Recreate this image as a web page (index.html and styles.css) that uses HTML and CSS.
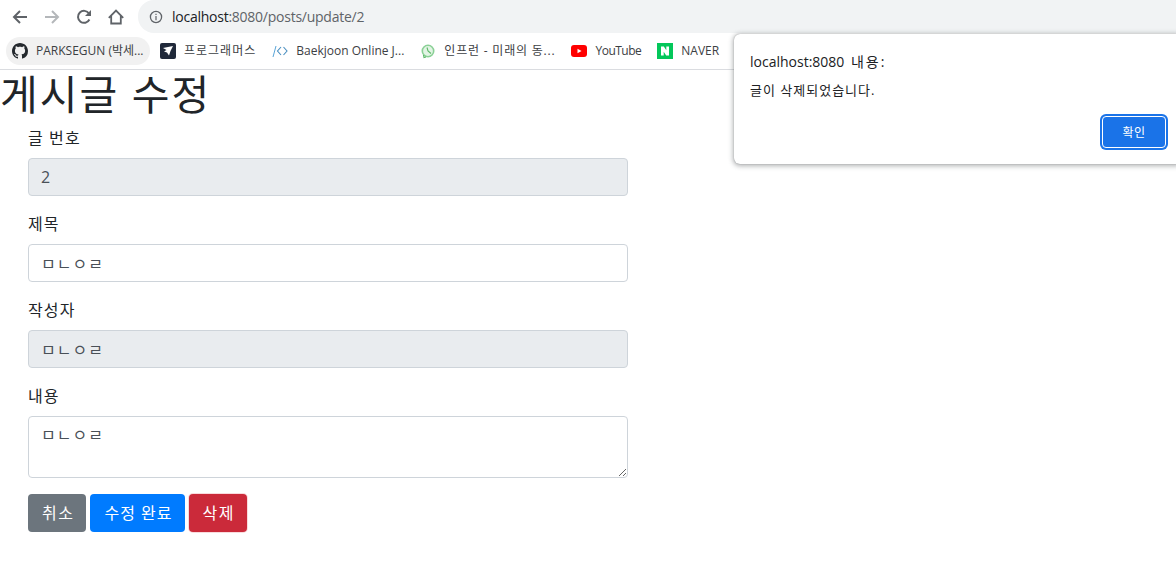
FILE: index.html
```html
<!DOCTYPE html>
<html lang="ko">
<head>
<meta charset="utf-8">
<title>게시글 수정</title>
<link rel="stylesheet" href="styles.css">
</head>
<body>
<header class="chrome">
  <div class="toolbar">
    <div class="nav-buttons">
      <svg class="nav-icon" viewBox="0 0 16 16"><path d="M15 8H2.500M8 2 2 8l6 6" fill="none" stroke="#5f6368" stroke-width="2"/></svg>
      <svg class="nav-icon" viewBox="0 0 16 16"><path d="M1 8h12.500M8 2l6 6-6 6" fill="none" stroke="#b4b7ba" stroke-width="2"/></svg>
      <svg class="nav-icon" viewBox="0 0 16 16"><path d="M13.400 10.500A6 6 0 1 1 13 4.500" fill="none" stroke="#5f6368" stroke-width="2"/><path d="M15 1v6H9z" fill="#5f6368"/></svg>
      <svg class="nav-icon" viewBox="0 0 16 16"><path d="M.8 8.800 8 1.500l7.200 7.300M3.200 7v7.500h9.600V7" fill="none" stroke="#5f6368" stroke-width="1.800"/></svg>
    </div>
    <div class="address">
      <svg class="info-icon" viewBox="0 0 14 14"><circle cx="7" cy="7" r="5.600" fill="none" stroke="#5f6368" stroke-width="1.300"/><path d="M6.400 6h1.200v4.200H6.400zM6.400 3.700h1.200v1.200H6.400z" fill="#5f6368"/></svg>
      <span class="url"><span class="url-host">localhost</span>:8080/posts/update/2</span>
    </div>
  </div>
  <nav class="bookmarks">
    <a class="bookmark bookmark-active">
      <svg class="fav" viewBox="0 0 16 16"><path fill="#24292e" d="M8 0C3.580 0 0 3.580 0 8c0 3.540 2.290 6.530 5.470 7.590.4.070.55-.17.55-.38 0-.19-.01-.82-.01-1.490-2.010.37-2.530-.49-2.690-.94-.09-.23-.48-.94-.82-1.130-.28-.15-.68-.52-.01-.53.63-.01 1.080.58 1.230.82.72 1.210 1.870.87 2.330.66.070-.52.28-.87.51-1.070-1.780-.2-3.640-.89-3.640-3.950 0-.87.31-1.590.82-2.150-.08-.2-.36-1.020.08-2.120 0 0 .67-.21 2.200.82.64-.18 1.320-.27 2-.27.68 0 1.360.09 2 .27 1.530-1.040 2.200-.82 2.200-.82.44 1.100.16 1.920.08 2.120.51.56.82 1.270.82 2.150 0 3.070-1.870 3.750-3.650 3.950.29.25.54.73.54 1.480 0 1.070-.01 1.930-.01 2.200 0 .21.15.46.55.38A8.013 8.013 0 0 0 16 8c0-4.420-3.580-8-8-8z"/></svg>
      <span class="bookmark-label">PARKSEGUN (박세...</span>
    </a>
    <a class="bookmark">
      <svg class="fav" viewBox="0 0 16 16"><rect width="16" height="16" rx="2" fill="#20293a"/><path d="M3 5 13 3l-2.500 5-1.500 4.500L7 9.500 4 8.500l2.500-1.500z" fill="#fff"/></svg>
      <span class="bookmark-label label-programmers">프로그래머스</span>
    </a>
    <a class="bookmark">
      <svg class="fav" viewBox="0 0 16 16"><path d="M1 14 4 3" fill="none" stroke="#5aa5d8" stroke-width="1"/><path d="M9 4 5.500 8 9 12M11.500 4 15 8l-3.500 4" fill="none" stroke="#4a8fc0" stroke-width="1.100"/></svg>
      <span class="bookmark-label">Baekjoon Online J...</span>
    </a>
    <a class="bookmark">
      <svg class="fav" viewBox="0 0 16 16"><circle cx="8" cy="8" r="5.700" fill="#e2f4e4" stroke="#8ad096" stroke-width="1.600"/><path d="M7 4.500 8 8l3 2.500M3.500 12l.5 2.500 2-.5" fill="none" stroke="#5cb868" stroke-width="1.100"/></svg>
      <span class="bookmark-label label-inflearn">인프런 - 미래의 동...</span>
    </a>
    <a class="bookmark">
      <svg class="fav" viewBox="0 0 16 16"><rect y="2" width="16" height="12" rx="3" fill="#f00"/><path d="M6.500 5.700v4.600L10.500 8z" fill="#fff"/></svg>
      <span class="bookmark-label label-youtube">YouTube</span>
    </a>
    <a class="bookmark">
      <svg class="fav" viewBox="0 0 16 16"><rect width="16" height="16" fill="#03c75a"/><path d="M4 3.500h2.800l2.500 3.800V3.500H12v9H9.200L6.700 8.700v3.800H4z" fill="#fff"/></svg>
      <span class="bookmark-label">NAVER</span>
    </a>
  </nav>
</header>

<main>
  <h1 class="page-title">게시글 수정</h1>
  <form class="post-form">
    <div class="form-group">
      <label class="form-label">글 번호</label>
      <input class="form-control" value="2" disabled>
    </div>
    <div class="form-group">
      <label class="form-label">제목</label>
      <input class="form-control" value="ㅁㄴㅇㄹ">
    </div>
    <div class="form-group">
      <label class="form-label">작성자</label>
      <input class="form-control" value="ㅁㄴㅇㄹ" disabled>
    </div>
    <div class="form-group">
      <label class="form-label">내용</label>
      <textarea class="form-control form-textarea">ㅁㄴㅇㄹ</textarea>
    </div>
    <div class="actions">
      <button type="button" class="btn btn-secondary">취소</button>
      <button type="button" class="btn btn-primary">수정 완료</button>
      <button type="button" class="btn btn-danger">삭제</button>
    </div>
  </form>
</main>

<div class="dialog" role="alertdialog">
  <p class="dialog-title">localhost:8080 <span class="dialog-title-ko">내용:</span></p>
  <p class="dialog-message">글이 삭제되었습니다.</p>
  <div class="dialog-actions">
    <button type="button" class="dialog-ok">확인</button>
  </div>
</div>
</body>
</html>
```

FILE: styles.css
```css
* { box-sizing: border-box; }

html, body { margin: 0; padding: 0; }

body {
  background: #fff;
  color: #212529;
  font-family: "Open Sans", "Noto Sans CJK KR", sans-serif;
  font-size: 16px;
  line-height: 1.5;
  height: 588px;
  overflow: hidden;
}

.chrome {
  height: 70px;
  border-bottom: 1px solid #dadce0;
}

.toolbar {
  display: flex;
  height: 35px;
  padding-bottom: 2px;
}

.nav-buttons {
  display: flex;
  align-items: center;
  gap: 16px;
  padding: 0 14px 0 12px;
}

.nav-icon { width: 16px; height: 16px; display: block; }

.address {
  flex: 1;
  display: flex;
  align-items: center;
  background: #f1f3f4;
  border-radius: 16px 0 0 16px;
  padding-left: 11px;
}

.info-icon { width: 14px; height: 14px; margin-right: 9px; }

.url {
  font-size: 14px;
  letter-spacing: -.25px;
  color: #5f6368;
  white-space: nowrap;
}

.url-host { color: #202124; }

.bookmarks {
  display: flex;
  align-items: center;
  height: 34px;
  padding: 0 0 2px 6px;
  font-size: 12px;
  color: #3c4043;
}

.bookmark {
  display: flex;
  align-items: center;
  height: 28px;
  padding: 0 6px;
  margin-right: 4px;
  white-space: nowrap;
  border-radius: 14px;
}

.bookmark-active {
  background: #f1f1f1;
  width: 144px;
}

.label-programmers { letter-spacing: 1px; }
.label-inflearn { letter-spacing: .8px; }
.label-youtube { letter-spacing: -.5px; }

.fav { width: 16px; height: 16px; margin-right: 8px; flex: none; }

.dialog {
  position: absolute;
  left: 734px;
  top: 34px;
  width: 448px;
  height: 130px;
  padding: 16px;
  background: #fff;
  border-radius: 6px;
  box-shadow: 0 0 1px rgba(60, 64, 67, .5), 0 1px 5px 1px rgba(60, 64, 67, .4);
  color: #202124;
}

.dialog-title {
  margin: 0;
  font-size: 14px;
  line-height: 24px;
}

.dialog-title-ko { margin-left: 3px; letter-spacing: 2px; }

.dialog-message {
  margin: 6px 0 0;
  font-size: 13px;
  line-height: 20px;
  letter-spacing: 1px;
}

.dialog-actions { position: absolute; left: 368px; top: 82px; }

.dialog-ok {
  display: block;
  width: 64px;
  height: 32px;
  padding: 0;
  background: #1a73e8;
  color: #fff;
  border: 1px solid #fff;
  border-radius: 4px;
  box-shadow: 0 0 0 2px #1a73e8;
  font: 12px "Open Sans", "Noto Sans CJK KR", sans-serif;
  letter-spacing: .5px;
}

.page-title {
  margin: 0 0 8px;
  font-size: 41px;
  font-weight: 400;
  line-height: 48px;
  letter-spacing: 2px;
}

.post-form { width: 600px; margin-left: 28px; }

.form-group { margin-bottom: 16px; }

.form-label {
  display: block;
  margin-bottom: 8px;
  letter-spacing: 1.1px;
}

.form-control {
  display: block;
  width: 100%;
  height: 38px;
  padding: 6px 12px;
  border: 1px solid #ced4da;
  border-radius: 4px;
  background: #fff;
  color: #495057;
  font: 16px/24px "Open Sans", "Noto Sans CJK KR", sans-serif;
  letter-spacing: 1px;
}

.form-control:disabled { background: #e9ecef; }

.form-textarea { height: 62px; }

.actions { display: flex; gap: 4px; }

.btn {
  height: 38px;
  padding: 6px 11px 6px 13px;
  border: 1px solid transparent;
  border-radius: 4px;
  color: #fff;
  font: 16px/24px "Open Sans", "Noto Sans CJK KR", sans-serif;
  letter-spacing: 1.5px;
}

.btn-secondary { background: #6c757d; }
.btn-primary { background: #007bff; letter-spacing: 1px; }
.btn-danger { background: #cb2a3a; box-shadow: 0 0 0 1px rgba(220, 53, 69, .18); }
```
